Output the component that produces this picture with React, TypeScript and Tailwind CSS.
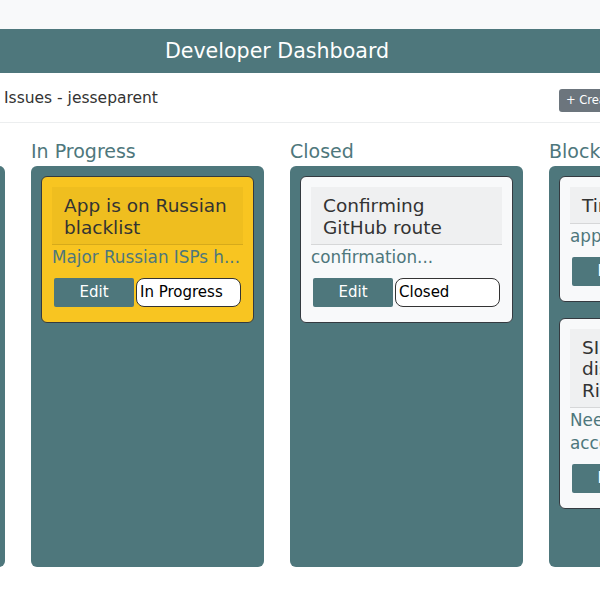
import React from "react";

type Issue = {
  id: number;
  title: string;
  body: string;
  status: string;
};

type Column = {
  name: string;
  issues: Issue[];
};

const columns: Column[] = [
  {
    name: "Open",
    issues: [{ id: 1, title: "Login page broken", body: "Users cannot sign in", status: "Open" }],
  },
  {
    name: "In Progress",
    issues: [
      {
        id: 2,
        title: "App is on Russian blacklist",
        body: "Major Russian ISPs have blocked the app domain",
        status: "In Progress",
      },
    ],
  },
  {
    name: "Closed",
    issues: [
      {
        id: 3,
        title: "Confirming GitHub route",
        body: "confirmation",
        status: "Closed",
      },
    ],
  },
  {
    name: "Blocked",
    issues: [
      { id: 4, title: "Timeouts", body: "app", status: "Blocked" },
      {
        id: 5,
        title: "SIM support disconnected Right away",
        body: "Need to confirm account ownership",
        status: "Blocked",
      },
    ],
  },
];

// same as the app: first 20 chars then an ellipsis
const shorten = (text: string) => text.substring(0, 20) + "...";

function IssueCard({ issue }: { issue: Issue }) {
  const inProgress = issue.status === "In Progress";
  return (
    <div
      className={
        inProgress
          ? "border border-[#343a40] rounded-md bg-[#f8c521] pt-[10px] px-[10px] pb-[15px]"
          : "border border-[#343a40] rounded-md bg-[#f8f9fa] pt-[10px] px-[10px] pb-[15px]"
      }
    >
      <div className="bg-black/[0.035] border-b border-black/10 px-[12px] pt-[8px] pb-[6px] text-[18.5px] leading-[21.5px] text-[#333]">
        {issue.title}
      </div>
      <p className="text-[16.8px] leading-[23px] text-[#4e777c] mt-px">{shorten(issue.body)}</p>
      <div className="flex gap-[2px] mt-[9px] px-[2px]">
        <button className="w-[80px] h-[29px] bg-[#4e777c] text-white text-[15px] rounded-[2px]">
          Edit
        </button>
        <div className="flex-1 h-[29px] bg-white border border-[#333] rounded-lg text-[15px] text-black flex items-center px-[3px]">
          {issue.status}
        </div>
      </div>
    </div>
  );
}

export default function App() {
  return (
    <div
      className="w-[600px] h-[600px] overflow-hidden bg-white"
      style={{ fontFamily: '"DejaVu Sans", Verdana, sans-serif' }}
    >
      <div className="h-[29px] bg-[#f8f9fa]" />
      <header className="h-[44px] bg-[#4e777c] flex items-center justify-center pr-[46px]">
        <h1 className="text-white text-[20.6px]">Developer Dashboard</h1>
      </header>
      <div className="grid grid-cols-[559px_auto] items-start h-[50px] border-b border-[#eceeef]">
        <span className="pl-1 mt-[14px] text-[15.5px] leading-[22px] text-[#333]">Issues - jesseparent</span>
        <button className="mt-[16px] h-[23px] px-[7px] rounded-[3px] bg-[#6c757d] text-white text-[11.5px] whitespace-nowrap text-left">
          + Create Issue
        </button>
      </div>
      <div className="flex gap-[26px] ml-[-228px] mt-[17px]">
        {columns.map((col) => (
          <div key={col.name} className="w-[233px] shrink-0 flex flex-col">
            <h2 className="text-[19px] leading-[22px] text-[#4e777c]">{col.name}</h2>
            <div className="mt-[4px] h-[401px] bg-[#4e777c] rounded-md p-[10px] flex flex-col gap-[16px]">
              {col.issues.map((issue) => (
                <IssueCard key={issue.id} issue={issue} />
              ))}
            </div>
          </div>
        ))}
      </div>
    </div>
  );
}
